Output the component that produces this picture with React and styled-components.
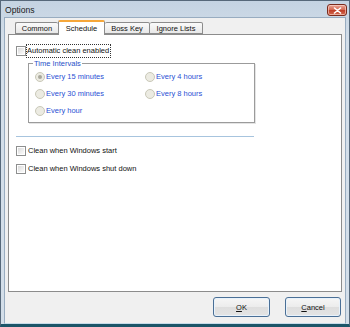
import React from "react";
import styled, { createGlobalStyle } from "styled-components";

const Global = createGlobalStyle`
  html, body { margin: 0; padding: 0; background: #fff; }
  body { width: 350px; height: 327px; overflow: hidden; font-family: "Liberation Sans", Arial, sans-serif; }
  * { box-sizing: border-box; }
`;

const Frame = styled.div`
  width: 350px;
  height: 327px;
  display: flex;
  flex-direction: column;
  background: linear-gradient(#c4d3e2, #d3dee9 40px, #d3dee9);
  border: 1px solid #56687a;
  border-bottom: 3px solid #1b5568;
  padding: 0 3px 0 3px;
`;

const TitleBar = styled.div`
  height: 16px;
  flex: none;
  display: flex;
  align-items: center;
  justify-content: space-between;
  padding-left: 1px;
  padding-right: 0;
`;

const Title = styled.span`
  font-size: 8.6px;
  color: #1b1b1b;
  padding-top: 1px;
`;

const CloseBtn = styled.div`
  width: 20px;
  height: 12px;
  margin-top: 2px;
  margin-right: -1px;
  border: 1px solid #7a2b1d;
  border-radius: 3px;
  background: linear-gradient(#e9a597, #d4674f 50%, #c0402a 55%, #d26a4f);
  display: flex;
  align-items: center;
  justify-content: center;
  box-shadow: inset 0 0 0 1px rgba(255, 220, 210, 0.6);
`;

const Body = styled.div`
  flex: 1;
  display: flex;
  flex-direction: column;
  background: #f0f0f0;
  border: 1px solid #98acc0;
  border-bottom-color: #c6dbe8;
  padding-top: 2px;
`;

const TabStrip = styled.div`
  display: flex;
  align-items: flex-end;
  height: 14px;
  padding-left: 10px;
  position: relative;
  z-index: 1;
`;

const Tab = styled.div`
  height: ${(p) => (p.$active ? "15px" : "12px")};
  margin-bottom: ${(p) => (p.$active ? "-1px" : "0")};
  width: ${(p) => p.$w}px;
  display: flex;
  align-items: center;
  justify-content: center;
  font-size: 7.5px;
  color: #111;
  border: 1px solid #8c8c8c;
  border-bottom: ${(p) => (p.$active ? "none" : "1px solid #8c8c8c")};
  border-left: ${(p) => (p.$first || p.$active ? "1px solid #8c8c8c" : "none")};
  border-right: ${(p) => (p.$beforeActive ? "none" : "1px solid #8c8c8c")};
  border-top: ${(p) => (p.$active ? "2px solid #f6a73a" : "1px solid #8c8c8c")};
  border-radius: 2px 2px 0 0;
  background: ${(p) => (p.$active ? "#fff" : "linear-gradient(#fafafa, #e8e8e8)")};
  padding-top: ${(p) => (p.$active ? "0" : "1px")};
`;

const Panel = styled.div`
  flex: none;
  height: 258px;
  margin: 0 3px;
  background: #fff;
  border: 1px solid #8c8c8c;
  border-top-color: #8c8c8c;
  padding: 9px 0 0 7px;
  display: flex;
  flex-direction: column;
  align-items: flex-start;
`;

const CheckRow = styled.label`
  display: flex;
  align-items: center;
  height: ${(p) => p.$h || 12}px;
  margin-top: ${(p) => p.$mt || 0}px;
  font-size: 7.5px;
  color: #111;
`;

const Box = styled.span`
  width: 10px;
  height: 10px;
  flex: none;
  border: 1px solid #8e8f8f;
  background: linear-gradient(135deg, #d4d4d4, #f4f4f4 70%, #fcfcfc);
  box-shadow: inset 0 0 0 1px #fff;
`;

const CheckText = styled.span`
  margin-left: ${(p) => (p.$focus ? "1px" : "2px")};
  padding: ${(p) => (p.$focus ? "1px 1px 1px 0" : "0")};
  outline: ${(p) => (p.$focus ? "1px dotted #333" : "none")};
  line-height: 10px;
`;

const Group = styled.div`
  position: relative;
  margin-left: 12px;
  margin-top: 6px;
  width: 227px;
  height: 60px;
  border: 1px solid #9b9b9b;
  box-shadow: 1px 1px 0 #e4e4e4;
  padding: 4px 0 0 6px;
`;

const Legend = styled.span`
  position: absolute;
  left: 4px;
  top: -5px;
  padding: 0 1px;
  background: #fff;
  font-size: 7.5px;
  line-height: 9px;
  color: #2850c8;
`;

const RadioGrid = styled.div`
  display: grid;
  grid-template-columns: 110px auto;
  grid-auto-rows: 17px;
`;

const RadioRow = styled.div`
  display: flex;
  align-items: center;
  font-size: 7.5px;
  color: #2a50d4;
`;

const Radio = styled.span`
  width: 10px;
  height: 10px;
  flex: none;
  border-radius: 50%;
  border: 1px solid #c9c8b8;
  background: #ecebe2;
  display: flex;
  align-items: center;
  justify-content: center;
  margin-right: 1px;
  &::after {
    content: "";
    width: 4px;
    height: 4px;
    border-radius: 50%;
    background: ${(p) => (p.$checked ? "#a9a89c" : "transparent")};
  }
`;

const Separator = styled.div`
  margin-top: 13px;
  width: 238px;
  height: 1px;
  background: #a7c4de;
`;

const ButtonRow = styled.div`
  display: flex;
  justify-content: flex-end;
  gap: 15px;
  padding: 5px 4px 0 0;
`;

const Button = styled.div`
  width: ${(p) => p.$w}px;
  height: 20px;
  border: 1px solid #4a6f96;
  border-radius: 3px;
  background: linear-gradient(#f6f6f6, #ececec 50%, #dedede 52%, #e4e4e4);
  box-shadow: inset 0 0 0 1px #e8f2fb;
  display: flex;
  align-items: center;
  justify-content: center;
  font-size: 7.5px;
  color: #111;
  u { text-decoration: underline; }
`;

export default function App() {
  return (
    <>
      <Global />
      <Frame>
        <TitleBar>
          <Title>Options</Title>
          <CloseBtn>
            <svg width="9" height="7" viewBox="0 0 9 7">
              <path d="M1.5 1 L7.5 6 M7.5 1 L1.5 6" stroke="#fff" strokeWidth="1.6" strokeLinecap="round" />
            </svg>
          </CloseBtn>
        </TitleBar>
        <Body>
          <TabStrip>
            <Tab $w={43} $first $beforeActive>Common</Tab>
            <Tab $w={47} $active>Schedule</Tab>
            <Tab $w={45}>Boss Key</Tab>
            <Tab $w={53}>Ignore Lists</Tab>
          </TabStrip>
          <Panel>
            <CheckRow $h={13}>
              <Box />
              <CheckText $focus>Automatic clean enabled</CheckText>
            </CheckRow>
            <Group>
              <Legend>Time Intervals</Legend>
              <RadioGrid>
                <RadioRow><Radio $checked />Every 15 minutes</RadioRow>
                <RadioRow><Radio />Every 4 hours</RadioRow>
                <RadioRow><Radio />Every 30 minutes</RadioRow>
                <RadioRow><Radio />Every 8 hours</RadioRow>
                <RadioRow><Radio />Every hour</RadioRow>
              </RadioGrid>
            </Group>
            <Separator />
            <CheckRow $mt={8}>
              <Box />
              <CheckText>Clean when Windows start</CheckText>
            </CheckRow>
            <CheckRow $mt={6}>
              <Box />
              <CheckText>Clean when Windows shut down</CheckText>
            </CheckRow>
          </Panel>
          <ButtonRow>
            <Button $w={57}><span><u>O</u>K</span></Button>
            <Button $w={56}><span><u>C</u>ancel</span></Button>
          </ButtonRow>
        </Body>
      </Frame>
    </>
  );
}
